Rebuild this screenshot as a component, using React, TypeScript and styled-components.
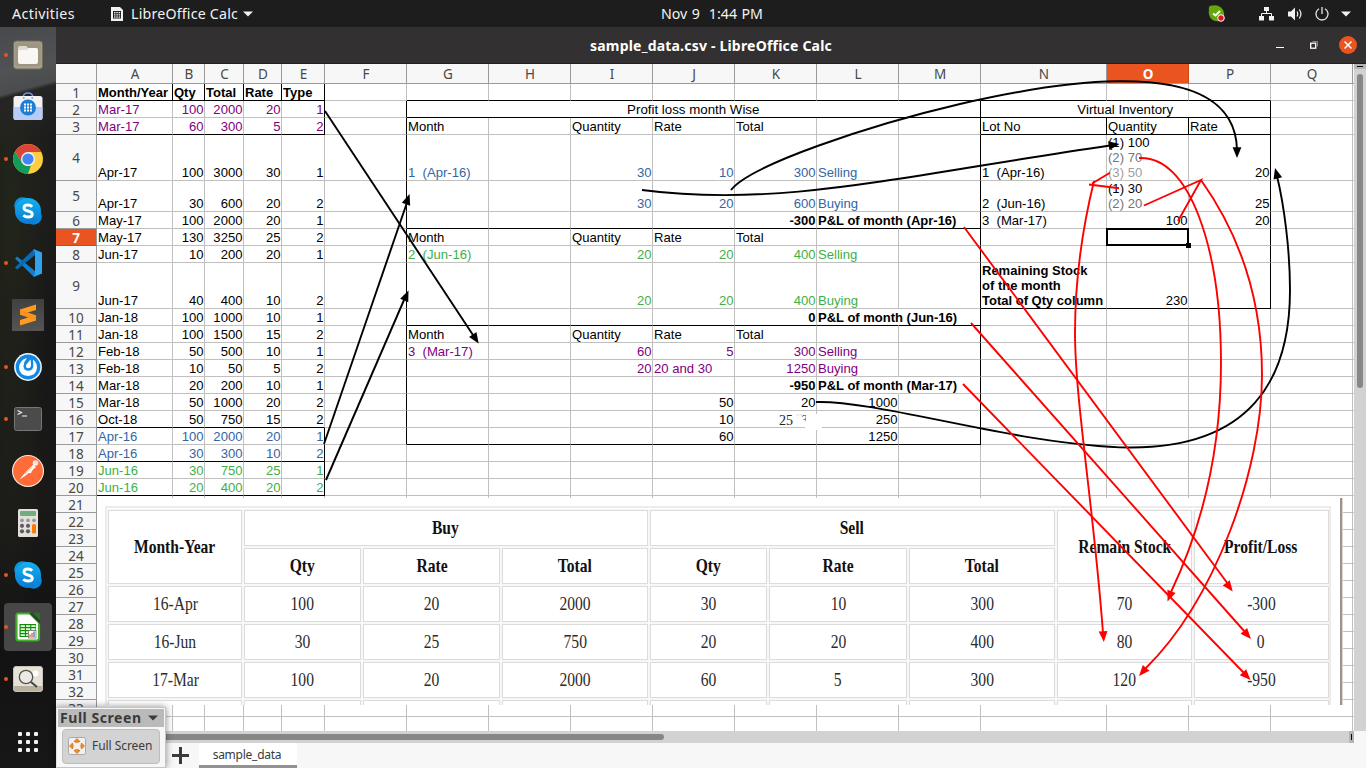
import React from "react";
import styled, { createGlobalStyle, css } from "styled-components";

const UI = `"Noto Sans", "Open Sans", sans-serif`;
const GRID = "#c0c0c0";
const PURPLE = "#800080";
const BLUE = "#3465a4";
const GREEN = "#3faf46";

const GlobalStyle = createGlobalStyle`
  * { box-sizing: border-box; }
  body { margin: 0; overflow: hidden; background: #1d1d1d; }
`;

const Desktop = styled.div`
  width: 1366px;
  height: 768px;
  display: flex;
  flex-direction: column;
  overflow: hidden;
  font-family: ${UI};
`;

/* ---------- top bar ---------- */
const TopBar = styled.header`
  height: 27px;
  flex: none;
  display: grid;
  grid-template-columns: 661px auto 1fr;
  align-items: center;
  background: #1d1d1d;
  color: #f2f2f2;
  font-size: 14.2px;
  line-height: 27px;
`;
const BarLeft = styled.div`
  display: flex;
  align-items: center;
  padding-left: 12px;
`;
const Activities = styled.span`
  width: 99px;
  letter-spacing: 0.38px;
`;
const AppName = styled.span`
  margin: 0 5px 0 8px;
  letter-spacing: 0.2px;
`;
const Clock = styled.div`
  white-space: pre;
  word-spacing: 0.8px;
`;
const BarRight = styled.div`
  display: flex;
  justify-content: flex-end;
  align-items: center;
  padding-right: 14px;
`;
const TrayIcon = styled.svg<{ $gap: number }>`
  display: block;
  margin-right: ${(p) => p.$gap}px;
`;

const Main = styled.div`
  flex: 1;
  display: flex;
  min-height: 0;
`;

/* ---------- dock ---------- */
const Dock = styled.nav`
  width: 56px;
  flex: none;
  padding-top: 2px;
  display: flex;
  flex-direction: column;
  background: linear-gradient(165deg, #48494c 0, #505254 45px, #4b4c4e 66px, #262525 70px, rgba(30, 29, 28, 0) 120px),
    radial-gradient(ellipse at 20% 22%, #22251a 0, rgba(29, 27, 27, 0) 60%),
    linear-gradient(#1c1b1b 0, #1d1d1b 180px, #171717 300px, #1a1917 480px, #121214 620px, #171717 100%);
`;
const DockItem = styled.div<{ $running?: boolean; $active?: boolean }>`
  position: relative;
  width: 48px;
  height: 48px;
  margin: 2px 4px;
  display: flex;
  align-items: center;
  justify-content: center;
  border-radius: 4px;
  background: ${(p) => (p.$active ? "#474747" : "transparent")};
  ${(p) =>
    p.$running &&
    css`
      &::before {
        content: "";
        position: absolute;
        left: 0;
        top: 22px;
        width: 4px;
        height: 4px;
        border-radius: 50%;
        background: #e95420;
      }
    `}
`;
const AppGrid = styled.div`
  display: grid;
  grid-template-columns: repeat(3, 4px);
  gap: 4px;
  margin: 27px auto 0 18px;
`;
const AppDot = styled.i`
  width: 4px;
  height: 4px;
  border-radius: 1px;
  background: #f0f0f0;
`;

/* ---------- window ---------- */
const Window = styled.section`
  flex: 1;
  min-width: 0;
  position: relative;
  display: flex;
  flex-direction: column;
  background: #f7f7f7;
`;
const TitleBar = styled.div`
  height: 37px;
  flex: none;
  display: grid;
  grid-template-columns: 1fr auto 1fr;
  align-items: center;
  background: #323030;
  border-bottom: 1px solid #201e1f;
  color: #fff;
`;
const Title = styled.h1`
  grid-column: 2;
  margin: 0;
  font-size: 14px;
  letter-spacing: 0.2px;
  font-weight: 700;
  white-space: nowrap;
`;
const WindowButtons = styled.div`
  display: flex;
  align-items: center;
  justify-content: flex-end;
  padding-right: 8px;
`;
const WorkArea = styled.div`
  height: 667px;
  flex: none;
  display: flex;
`;
const Viewport = styled.div`
  position: relative;
  width: 1298px;
  height: 667px;
  overflow: hidden;
  background: #fff;
`;
const VScroll = styled.div`
  width: 12px;
  background: #d2d2d2;
`;
const SplitHandleV = styled.div`
  height: 5px;
  display: flex;
  align-items: center;
  justify-content: center;
  background: #b4b4b4;
  &::after {
    content: "";
    width: 6px;
    height: 1px;
    background: #000;
  }
`;
const ThumbV = styled.div`
  width: 6px;
  height: 314px;
  margin: 5px 0 0 3px;
  border-radius: 3px;
  background: #878787;
`;
const HScroll = styled.div`
  width: 1298px;
  height: 12px;
  flex: none;
  display: flex;
  align-items: center;
  background: #d2d2d2;
`;
const ThumbH = styled.div`
  width: 608px;
  height: 6px;
  border-radius: 3px;
  background: #878787;
`;
const SplitHandleH = styled.div`
  width: 5px;
  height: 12px;
  margin-left: auto;
  padding: 3px 2px;
  background: #b4b4b4;
  &::after {
    content: "";
    display: block;
    width: 1px;
    height: 6px;
    background: #000;
  }
`;
const TabBar = styled.div`
  height: 25px;
  display: flex;
  align-items: stretch;
  padding-left: 115px;
  background: #f7f7f7;
`;
const AddTab = styled.svg`
  margin: 3px 10px 0 0;
`;
const Tab = styled.div`
  width: 98px;
  height: 25px;
  padding-right: 2px;
  background: #fff;
  border-bottom: 3px solid #929292;
  color: #3b3b3b;
  font-size: 12px;
  line-height: 24px;
  text-align: center;
  letter-spacing: -0.25px;
`;

/* ---------- sheet ---------- */
const COLS = [76, 32, 39, 38, 43, 82, 82, 82, 82, 82, 82, 82, 82, 126, 82, 82, 82];
const LETTERS = "ABCDEFGHIJKLMNOPQ";
const ROWS = [17, 17, 17, 46, 31, 17, 17, 17, 46, ...Array(25).fill(17)];

const Sheet = styled.div`
  display: grid;
  width: 1299px;
  grid-template-columns: 41px ${COLS.map((w) => w + "px").join(" ")} 2px;
  grid-template-rows: 20px ${ROWS.map((h) => h + "px").join(" ")};
`;
const HeadCell = styled.div<{ $sel?: boolean; $row?: boolean; $tall?: boolean }>`
  display: flex;
  align-items: center;
  justify-content: center;
  padding-top: ${(p) => (p.$tall ? 0 : p.$row ? 2 : 1)}px;
  padding-left: ${(p) => (p.$row ? 0 : 1)}px;
  background: ${(p) => (p.$sel ? "#e95420" : "#f7f7f7")};
  color: ${(p) => (p.$sel ? "#fff" : "#484848")};
  font-weight: ${(p) => (p.$sel ? 700 : 400)};
  font-size: 13.5px;
  line-height: 14px;
  border-right: 1px solid ${(p) => (p.$sel && !p.$row ? "#cf4818" : "#9a9a9a")};
  border-bottom: 1px solid ${(p) => (p.$sel && p.$row ? "#cf4818" : "#9a9a9a")};
`;
type CellStyle = {
  $right?: boolean;
  $center?: boolean;
  $bold?: boolean;
  $color?: string;
  $span?: number;
  $br?: string;
  $bb?: string;
};
const Cell = styled.div<CellStyle>`
  position: relative;
  display: flex;
  flex-direction: column;
  justify-content: flex-end;
  min-width: 0;
  padding: 0 ${(p) => (p.$center ? 1.5 : 0.5)}px 0 1px;
  font-family: "Liberation Sans", Arial, sans-serif;
  font-size: ${(p) => (p.$center ? 13.3 : p.$bold ? 13 : 13.1)}px;
  line-height: 15px;
  white-space: pre;
  grid-column: span ${(p) => p.$span ?? 1};
  text-align: ${(p) => (p.$right ? "right" : p.$center ? "center" : "left")};
  font-weight: ${(p) => (p.$bold ? 700 : 400)};
  color: ${(p) => p.$color ?? "#000"};
  border-right: 1px solid ${(p) => p.$br ?? GRID};
  border-bottom: 1px solid ${(p) => p.$bb ?? GRID};
`;
const Line = styled.span<{ $tone?: string }>`
  color: ${(p) => p.$tone ?? "inherit"};
`;
const Cursor = styled.div`
  position: absolute;
  z-index: 1;
  left: -1px;
  top: -1px;
  width: 83px;
  height: 18px;
  border: 2px solid #000;
  &::after {
    content: "";
    position: absolute;
    right: -4px;
    bottom: -4px;
    width: 5px;
    height: 5px;
    background: #000;
  }
`;

type Entry = { v: React.ReactNode; r?: boolean; b?: boolean; c?: string };
const cells: Record<string, Entry> = {};
const put = (ref: string, v: React.ReactNode, o: Omit<Entry, "v"> = {}) => {
  cells[ref] = { v, ...o };
};

const LEDGER: [string, number, number, number, number, string?][] = [
  ["Mar-17", 100, 2000, 20, 1, PURPLE],
  ["Mar-17", 60, 300, 5, 2, PURPLE],
  ["Apr-17", 100, 3000, 30, 1],
  ["Apr-17", 30, 600, 20, 2],
  ["May-17", 100, 2000, 20, 1],
  ["May-17", 130, 3250, 25, 2],
  ["Jun-17", 10, 200, 20, 1],
  ["Jun-17", 40, 400, 10, 2],
  ["Jan-18", 100, 1000, 10, 1],
  ["Jan-18", 100, 1500, 15, 2],
  ["Feb-18", 50, 500, 10, 1],
  ["Feb-18", 10, 50, 5, 2],
  ["Mar-18", 20, 200, 10, 1],
  ["Mar-18", 50, 1000, 20, 2],
  ["Oct-18", 50, 750, 15, 2],
  ["Apr-16", 100, 2000, 20, 1, BLUE],
  ["Apr-16", 30, 300, 10, 2, BLUE],
  ["Jun-16", 30, 750, 25, 1, GREEN],
  ["Jun-16", 20, 400, 20, 2, GREEN],
];
["Month/Year", "Qty", "Total", "Rate", "Type"].forEach((t, i) => put(LETTERS[i] + "1", t, { b: true }));
LEDGER.forEach(([m, q, t, ra, ty, c], i) => {
  const n = i + 2;
  put("A" + n, m, { c });
  [q, t, ra, ty].forEach((v, k) => put("BCDE"[k] + n, v, { r: true, c }));
});
[3, 7, 11].forEach((n) => {
  put("G" + n, "Month");
  put("I" + n, "Quantity");
  put("J" + n, "Rate");
  put("K" + n, "Total");
});
const deal = (n: number, label: string, q: number, rate: React.ReactNode, total: number, kind: string, c: string) => {
  if (label) put("G" + n, label, { c });
  put("I" + n, q, { r: true, c });
  put("J" + n, rate, { r: typeof rate === "number", c });
  put("K" + n, total, { r: true, c });
  put("L" + n, kind, { c });
};
deal(4, "1  (Apr-16)", 30, 10, 300, "Selling", BLUE);
deal(5, "", 30, 20, 600, "Buying", BLUE);
deal(8, "2  (Jun-16)", 20, 20, 400, "Selling", GREEN);
deal(9, "", 20, 20, 400, "Buying", GREEN);
deal(12, "3  (Mar-17)", 60, 5, 300, "Selling", PURPLE);
deal(13, "", 20, "20 and 30", 1250, "Buying", PURPLE);
([[6, "-300", "Apr-16"], [10, "0", "Jun-16"], [14, "-950", "Mar-17"]] as const).forEach(([n, v, m]) => {
  put("K" + n, v, { r: true, b: true });
  put("L" + n, `P&L of month (${m})`, { b: true });
});
put("J15", 50, { r: true });
put("K15", 20, { r: true });
put("L15", 1000, { r: true });
put("J16", 10, { r: true });
put("L16", 250, { r: true });
put("J17", 60, { r: true });
put("L17", 1250, { r: true });
put("N3", "Lot No");
put("O3", "Quantity");
put("P3", "Rate");
put("N4", "1  (Apr-16)");
put("N5", "2  (Jun-16)");
put("N6", "3  (Mar-17)");
put("O4", <><Line>(1) 100</Line><Line $tone="#757575">(2) 70</Line><Line $tone="#a0a0a0">(3) 50</Line></>);
put("O5", <><Line>(1) 30</Line><Line $tone="#757575">(2) 20</Line></>);
put("O6", 100, { r: true });
put("O7", <Cursor />);
put("P4", 20, { r: true });
put("P5", 25, { r: true });
put("P6", 20, { r: true });
put("N9", <><Line>Remaining Stock</Line><Line>of the month</Line><Line>Total of Qty column</Line></>, { b: true });
put("O9", 230, { r: true });

const within = (n: number, a: number, b: number) => n >= a && n <= b;

function rightEdge(col: string, n: number): string {
  if ("ABCD".includes(col) && n === 1) return "#000";
  if (col === "E" && (n <= 3 || within(n, 17, 20))) return "#000";
  if ((col === "F" || col === "M") && within(n, 2, 17)) return "#000";
  if ((col === "N" || col === "O") && n === 3) return "#000";
  if (col === "P" && within(n, 2, 9)) return "#000";
  if (col === "L" && [6, 10, 14].includes(n)) return "transparent";
  return GRID;
}
function bottomEdge(col: string, n: number): string {
  if (within(col.charCodeAt(0), 65, 69) && [1, 3, 16, 18, 20].includes(n)) return "#000";
  const profit = "GHIJKLM".includes(col);
  const stock = "NOP".includes(col);
  if ((profit || stock) && n <= 2) return "#000";
  if (profit && [6, 10, 17].includes(n)) return "#000";
  if (stock && (n === 3 || n === 9)) return "#000";
  return GRID;
}

function SheetRow({ n }: { n: number }) {
  const out: React.ReactNode[] = [
    <HeadCell key="h" $row $tall={ROWS[n - 1] > 17} $sel={n === 7}>{n}</HeadCell>,
  ];
  for (let i = 0; i < LETTERS.length; i++) {
    const col = LETTERS[i];
    if (n === 2 && col === "G") {
      out.push(<Cell key="G" $span={7} $center $br="#000" $bb="#000">Profit loss month Wise</Cell>);
      i += 6;
      continue;
    }
    if (n === 2 && col === "N") {
      out.push(<Cell key="N" $span={3} $center $br="#000" $bb="#000">Virtual Inventory</Cell>);
      i += 2;
      continue;
    }
    const e = cells[col + n];
    out.push(
      <Cell key={col} $right={e?.r} $bold={e?.b} $color={e?.c} $br={rightEdge(col, n)} $bb={bottomEdge(col, n)}>
        {e?.v}
      </Cell>
    );
  }
  out.push(<Cell key="z" $br="transparent" />);
  return <>{out}</>;
}

/* ---------- embedded summary picture ---------- */
const Picture = styled.div`
  position: absolute;
  left: 41px;
  top: 434px;
  width: 1246px;
  height: 207px;
  padding: 8px 0 0 8px;
  overflow: hidden;
  background: #fff;
  &::after {
    content: "";
    position: absolute;
    right: 0;
    top: 0;
    width: 3px;
    height: 207px;
    background: linear-gradient(90deg, #9c938e 0 2px, #ddd6cf 2px);
  }
`;
const SummaryFrame = styled.div`
  width: 1226px;
  height: 240px;
  padding: 2px 0 0 1px;
  border: 2px solid #ececec;
`;
const Summary = styled.div`
  display: grid;
  width: 1221px;
  grid-template-columns: 134px 117px 137px 145.5px 117.5px 138px 146px 134.5px 135px;
  grid-template-rows: repeat(6, 36px);
  gap: 2px;
`;
const SumCell = styled.div<{ $head?: boolean; $cs?: number; $rs?: number }>`
  grid-column: span ${(p) => p.$cs ?? 1};
  grid-row: span ${(p) => p.$rs ?? 1};
  display: flex;
  align-items: center;
  justify-content: center;
  padding-bottom: 1px;
  border: 1px solid #dcdcdc;
  box-shadow: 0 0 0 0.5px #efefef;
  font-family: "Liberation Serif", "Times New Roman", serif;
  font-size: 19px;
  line-height: 20px;
  font-weight: ${(p) => (p.$head ? 700 : 400)};
  color: ${(p) => (p.$head ? "#111" : "#2b2b2b")};
  white-space: nowrap;
`;
const Narrow = styled.span`
  transform: scaleX(0.82);
`;
const SUMMARY = [
  ["16-Apr", 100, 20, 2000, 30, 10, 300, 70, "-300"],
  ["16-Jun", 30, 25, 750, 20, 20, 400, 80, "0"],
  ["17-Mar", 100, 20, 2000, 60, 5, 300, 120, "-950"],
  ["", "", "", "", "", "", "", "", ""],
];

function SummaryTable() {
  const head = (t: string, cs = 1, rs = 1) => (
    <SumCell $head $cs={cs} $rs={rs}><Narrow>{t}</Narrow></SumCell>
  );
  return (
    <Picture>
      <SummaryFrame>
        <Summary>
          {head("Month-Year", 1, 2)}
          {head("Buy", 3)}
          {head("Sell", 3)}
          {head("Remain Stock", 1, 2)}
          {head("Profit/Loss", 1, 2)}
          {head("Qty")}{head("Rate")}{head("Total")}
          {head("Qty")}{head("Rate")}{head("Total")}
          {SUMMARY.map((row, i) => row.map((v, k) => (
            <SumCell key={`${i}-${k}`}><Narrow>{v}</Narrow></SumCell>
          )))}
        </Summary>
      </SummaryFrame>
    </Picture>
  );
}

/* ---------- drawn arrows ---------- */
const ArrowLayer = styled.svg`
  position: absolute;
  left: 0;
  top: 0;
  z-index: 2;
  pointer-events: none;
`;
function Head({ x, y, dx, dy, c }: { x: number; y: number; dx: number; dy: number; c: string }) {
  const a = (Math.atan2(dy, dx) * 180) / Math.PI;
  return <path d="M0 0L-10.8 -4.4V4.4Z" fill={c} transform={`translate(${x} ${y}) rotate(${a})`} />;
}
function Arrows() {
  const red = "#ff0000";
  return (
    <ArrowLayer width="1298" height="667" viewBox="56 64 1298 667" fill="none">
      <rect x="776" y="411" width="40" height="15" fill="#fff" />
      <rect x="805" y="414" width="17" height="16" fill="#fff" />
      <text x="779" y="425" fontFamily="Liberation Serif" fontSize="14" fill="#222">25</text>
      <text x="801" y="425" fontFamily="Liberation Serif" fontSize="14" fill="#444">3</text>
      <path d="M796 415h7" stroke="#ececec" strokeWidth="1.5" />
      <rect x="806" y="413" width="10" height="14" fill="#fff" />
      <rect x="800" y="422" width="10" height="4" fill="#fff" />
      <g stroke="#000" strokeWidth="1.9">
        <path d="M325 111L473 335" />
        <path d="M324 444L406.500 204" />
        <path d="M326 480L404 300" />
        <path d="M642 190C780 208 900 176 1110 145.500" />
        <path d="M731 190C750 165 870 125 960 104C1030 88 1080 81.500 1117 81.300C1190 80 1236 100 1237 150" />
        <path d="M816 402C880 400 1020 446 1130 447.500C1250 448 1290 380 1290 290C1290 250 1284 205 1277 176" />
      </g>
      <Head x={478.7} y={343.500} dx={153} dy={232} c="#000" />
      <Head x={409.5} y={194} dx={85} dy={-249} c="#000" />
      <Head x={408.500} y={290.500} dx={82} dy={-190} c="#000" />
      <Head x={1119.500} y={144} dx={10} dy={-1.5} c="#000" />
      <Head x={1237} y={158} dx={0} dy={1} c="#000" />
      <Head x={1275} y={168} dx={-3} dy={-11} c="#000" />
      <g stroke={red} strokeWidth="1.9">
        <path d="M964 227L1228 584" />
        <path d="M971 323L1245 632" />
        <path d="M963 384L1244 673" />
        <path d="M1139 158C1190 155 1221 250 1221 363C1221 430 1210 510 1171 592" />
        <path d="M1144 205.500L1201 180L1178 221M1201 180C1240 235 1262 300 1262 375C1262 470 1215 600 1145 669" />
        <path d="M1110 172.700L1092 183.500M1089 184.500L1119 188.300M1094 181C1082 230 1075 280 1075 333C1075 400 1094 510 1103 633" />
      </g>
      <Head x={1232.7} y={591.5} dx={269} dy={364} c={red} />
      <Head x={1251} y={639} dx={280} dy={316} c={red} />
      <Head x={1250.5} y={680} dx={287} dy={296} c={red} />
      <Head x={1167.500} y={601.500} dx={-4} dy={10} c={red} />
      <Head x={1139} y={676} dx={-7} dy={8} c={red} />
      <Head x={1103.800} y={642} dx={0.6} dy={9} c={red} />
    </ArrowLayer>
  );
}

/* ---------- floating toolbar ---------- */
const FloatBar = styled.aside`
  position: absolute;
  z-index: 3;
  left: 0;
  bottom: 0;
  width: 110px;
  height: 61px;
  padding: 1px 1px 0 1px;
  background: #f7f7f7;
  border: 1px solid #c4c4c4;
  border-left-color: #e2e2e2;
  box-shadow: 0 0 7px rgba(0, 0, 0, 0.45);
`;
const FloatHead = styled.div`
  height: 18px;
  display: flex;
  align-items: center;
  justify-content: space-between;
  padding: 0 6px 0 2px;
  background: #bababa;
  color: #3a3a3a;
  font-size: 14px;
  letter-spacing: 0.55px;
  font-weight: 700;
  line-height: 18px;
`;
const FloatButton = styled.div`
  height: 35px;
  margin: 2px 4px 0 4px;
  padding: 0 0 2px 5px;
  display: flex;
  align-items: center;
  gap: 6px;
  border: 1px solid #bdbdbd;
  border-radius: 4px;
  background: #d3d3d3;
  color: #3b3b3b;
  font-size: 12px;
  letter-spacing: -0.05px;
  white-space: nowrap;
`;

/* ---------- dock icons ---------- */
const Files = () => (
  <svg width="30" height="30" viewBox="0 0 30 30">
    <rect x="0.500" y="1" width="29" height="28" rx="3" fill="#aaa28f" stroke="#6f6a5c" />
    <rect x="2" y="2.500" width="26" height="24" rx="2" fill="#9d9682" />
    <path d="M5 8q0-2 2-2h6l2 2h7q3 0 3 3v9H5z" fill="#dfdbd0" />
    <path d="M5 12q0-2 2-2h7l2-2h7q2 0 2 2v12q0 2-2 2H7q-2 0-2-2z" fill="#f8f7f4" />
  </svg>
);
const Software = () => (
  <svg width="30" height="30" viewBox="0 0 30 30">
    <path d="M10 6q0-5 5-5t5 5" fill="none" stroke="#6e8fe0" strokeWidth="1.600" />
    <rect x="0.500" y="4" width="29" height="24" rx="2.500" fill="#f2f2f4" />
    <path d="M.5 15h29v10.500q0 2.500-2.500 2.500H3Q.5 28 .5 25.500z" fill="#b9cbf7" />
    <path d="M10 6h1.600M18.500 6H20" stroke="#6e8fe0" strokeWidth="1.600" />
    <circle cx="15" cy="15.500" r="8" fill="#1c7fd6" />
    {[11.500, 14.500, 17.500].map((y) => [11, 14, 17].map((x) => <rect key={`${x}${y}`} x={x} y={y} width="2" height="2" fill="#fff" />))}
  </svg>
);
const Chrome = () => (
  <svg width="30" height="30" viewBox="0 0 30 30">
    <circle cx="15" cy="15" r="15" fill="#ffcd40" />
    <path d="M2.010 7.500L8.940 18.500L15 22L15 8H28L27.990 7.500A15 15 0 0 0 2.010 7.500Z" fill="#db4437" />
    <path d="M2.010 7.500L8.940 18.500A7 7 0 0 0 18 21.300L15 30A15 15 0 0 1 2.010 7.500Z" fill="#0f9d58" />
    <circle cx="15" cy="15" r="7" fill="#f1f1f1" />
    <circle cx="15" cy="15" r="5.600" fill="#4285f4" />
  </svg>
);
const Skype = ({ id }: { id: string }) => (
  <svg width="28" height="28" viewBox="0 0 28 28">
    <defs>
      <linearGradient id={id} x1="0" y1="0" x2="0" y2="1">
        <stop offset="0" stopColor="#12b2ee" />
        <stop offset="1" stopColor="#0a7ad6" />
      </linearGradient>
    </defs>
    <circle cx="8.500" cy="8.500" r="8.300" fill="#1490df" />
    <circle cx="19.500" cy="19.500" r="8.300" fill="#0b86d8" />
    <circle cx="14" cy="14" r="13" fill={`url(#${id})`} />
    <path d="M18.200 9.700Q16.500 8 14 8Q10 8 10 10.900Q10 13.200 14 14Q18.300 14.800 18.300 17.200Q18.300 20 14 20Q11.200 20 9.300 18.200" fill="none" stroke="#fff" strokeWidth="2.900" />
  </svg>
);
const VsCode = () => (
  <svg width="28" height="28" viewBox="0 0 28 28">
    <path d="M1 9.500L3 7.500L21 22V28L19.500 27.500Z" fill="#0f7fcf" />
    <path d="M1 18.500L3 20.500L21 6V0L19.500.5Z" fill="#0a6bb5" />
    <path d="M20 .3L28 3.500V24.500L20 27.800L19.500 27L21 25V3L19.500 1Z" fill="#2fa3ee" />
  </svg>
);
const Sublime = () => (
  <svg width="32" height="32" viewBox="0 0 32 32">
    <defs>
      <linearGradient id="sub" x1="0" y1="0" x2="0" y2="1">
        <stop offset="0" stopColor="#404040" />
        <stop offset="1" stopColor="#555" />
      </linearGradient>
    </defs>
    <rect width="32" height="32" rx="1" fill="url(#sub)" />
    <path d="M8 10.500L24 5.500V11L15 13.700L24 16.500V21.500L8 26.500V21L17 18.200L8 15.500Z" fill="#ff9b20" />
    <path d="M8 10.500V15.500L24 21.500V16.500Z" fill="#f9931c" />
  </svg>
);
const Mattermost = () => (
  <svg width="28" height="28" viewBox="0 0 28 28">
    <circle cx="14" cy="14" r="13.900" fill="#f4f8fb" />
    <circle cx="14" cy="14" r="12.400" fill="#1187e6" />
    <path d="M13 5Q5.500 7 5 14.500Q5.500 22.500 14 23Q22.500 22.500 23 14.500Q23 9.500 19 6.500L19.300 12Q19.600 17.500 14.500 17.800Q9.500 17.500 9.500 13Q9.500 9 13 5Z" fill="#fff" />
    <path d="M16.500 6.500Q17.200 11 17 13Q16.300 15.500 14 15.300Q11.500 14.800 12 12Z" fill="#fff" />
  </svg>
);
const Terminal = () => (
  <svg width="28" height="24" viewBox="0 0 28 24">
    <rect x="0.500" y="0.500" width="27" height="23" rx="2" fill="#4b4b4b" stroke="#777" />
    <path d="M3.500 3.500L7.500 5.500L3.500 7.500M8 9H13" fill="none" stroke="#f4f4f4" strokeWidth="1.100" />
  </svg>
);
const Postman = () => (
  <svg width="32" height="32" viewBox="0 0 32 32">
    <circle cx="16" cy="16" r="16" fill="#f8efe9" />
    <circle cx="16" cy="16" r="14.900" fill="#ff6c37" />
    <circle cx="23.500" cy="8" r="2.800" fill="#fbe8de" />
    <path d="M21 10L24 12L13 21L7.500 24.500L12 19Z" fill="#fff" />
    <path d="M22 11L18.500 17.500L15 17L23 9" fill="none" stroke="#fff" strokeWidth="1.200" />
    <path d="M13 19L20 12.500" stroke="#f0a080" strokeWidth=".7" />
  </svg>
);
const Calculator = () => (
  <svg width="20" height="28" viewBox="0 0 20 28">
    <rect width="20" height="28" rx="1.500" fill="#e4e1dc" />
    <rect x="2" y="2" width="16" height="5" rx="1" fill="#70ac7d" />
    {[4, 10, 16].map((x) => <circle key={x} cx={x} cy="11.300" r="1.900" fill="#999" />)}
    {[16.800, 22.300].map((y) => [4, 10].map((x) => <circle key={`${x}-${y}`} cx={x} cy={y} r="2.100" fill="#5e5c64" />))}
    <rect x="14" y="15" width="4" height="9.500" rx="1.500" fill="#ff7800" />
  </svg>
);
const CalcIcon = () => (
  <svg width="26" height="30" viewBox="0 0 26 30">
    <path d="M3.500 1.500H15L24 10.500V26Q24 28.500 21.500 28.500H3.500Q1.500 28.500 1.500 26V3.500Q1.500 1.500 3.500 1.500Z" fill="#fff" stroke="#43b02a" strokeWidth="2.200" />
    <path d="M14 1L25 12V8L18 1Z" fill="#3a3a3a" />
    <path d="M18 1H25V8Z" fill="#15820e" />
    <rect x="4.500" y="12" width="16.500" height="13" fill="#138a0c" />
    {[13.200, 16.200, 19.200, 22.200].map((y) => [5.700, 11, 16.300].map((x) => <rect key={`${x}-${y}`} x={x} y={y} width="4.200" height="1.800" fill="#d8ffcf" />))}
    <rect x="13.500" y="18.500" width="7.500" height="7.500" fill="#fff" stroke="#777" strokeWidth=".8" />
    <path d="M15 25v-2.500M17 25v-4" stroke="#e9632a" strokeWidth="1.300" />
    <path d="M19 25v-5.500" stroke="#2e7cc9" strokeWidth="1.300" />
  </svg>
);
const ImageViewer = () => (
  <svg width="30" height="26" viewBox="0 0 30 26">
    <rect x="0.500" y="0.500" width="29" height="25" rx="2.500" fill="#e6e2d8" stroke="#c9c3b5" />
    <path d="M1 20h28v3q0 2-2 2H3q-2 0-2-2z" fill="#b8b19d" />
    <circle cx="22.500" cy="7.500" r="3" fill="#fff" />
    <circle cx="13" cy="11" r="6.700" fill="#eceae4" stroke="#55534f" strokeWidth="1.300" />
    <path d="M18 16L24 21" stroke="#444" strokeWidth="2" />
  </svg>
);

const DOCK: { icon: React.ReactNode; running?: boolean; active?: boolean }[] = [
  { icon: <Files />, running: true },
  { icon: <Software /> },
  { icon: <Chrome />, running: true },
  { icon: <Skype id="sk1" /> },
  { icon: <VsCode />, running: true },
  { icon: <Sublime /> },
  { icon: <Mattermost />, running: true },
  { icon: <Terminal />, running: true },
  { icon: <Postman /> },
  { icon: <Calculator /> },
  { icon: <Skype id="sk2" />, running: true },
  { icon: <CalcIcon />, running: true, active: true },
  { icon: <ImageViewer />, running: true },
];

const Caret = ({ gap = 0, color = "#f2f2f2" }) => (
  <TrayIcon $gap={gap} width="10" height="6" viewBox="0 0 10 6">
    <path d="M0 .5H10L5 5.500Z" fill={color} />
  </TrayIcon>
);

export default function App() {
  return (
    <Desktop>
      <GlobalStyle />
      <TopBar>
        <BarLeft>
          <Activities>Activities</Activities>
          <svg width="12" height="14" viewBox="0 0 12 14">
            <path d="M0 0H9L12 3V14H0Z" fill="#f2f2f2" />
            <path d="M2 4H10V11.500H2Z" fill="#1d1d1d" />
            {[5, 7.200, 9.400].map((y) => [3, 5.300, 7.600].map((x) => <rect key={`${x}-${y}`} x={x} y={y} width="1.500" height="1.300" fill="#f2f2f2" />))}
          </svg>
          <AppName>LibreOffice Calc</AppName>
          <Caret />
        </BarLeft>
        <Clock>Nov 9  1:44 PM</Clock>
        <BarRight>
          <TrayIcon $gap={34} width="17" height="17" viewBox="0 0 17 17">
            <path d="M1 5Q0 0 5 .6Q9-.4 13 2.500Q17 6 16 10Q17 16 11.500 16Q6 17 2.500 13Q0 9.500 1 5Z" fill="#64a70b" />
            <path d="M5 8.500L7.500 10.500L12 6" fill="none" stroke="#fff" strokeWidth="2" />
            <circle cx="13" cy="13" r="3.300" fill="#e81123" stroke="#fff" />
          </TrayIcon>
          <TrayIcon $gap={14} width="15" height="14" viewBox="0 0 15 14">
            <path d="M5 0h5v4H5zM0 9h5v4.500H0zM10 9h5v4.500h-5z" fill="#f2f2f2" />
            <path d="M7.500 4V7M2.500 9V6.500H12.500V9" fill="none" stroke="#f2f2f2" />
          </TrayIcon>
          <TrayIcon $gap={12} width="15" height="14" viewBox="0 0 15 14">
            <path d="M0 4.500H3L7 .5V13.500L3 9.500H0Z" fill="#f2f2f2" />
            <path d="M9 4.500Q10.500 7 9 9.500M11.300 2.500Q14.500 7 11.300 11.500" fill="none" stroke="#f2f2f2" strokeWidth="1.200" />
          </TrayIcon>
          <TrayIcon $gap={12} width="14" height="14" viewBox="0 0 14 14">
            <path d="M4 1.800A6 6 0 1 0 10 1.800M7 0V7" fill="none" stroke="#e6e6e6" strokeWidth="1.300" />
          </TrayIcon>
          <Caret gap={1} />
        </BarRight>
      </TopBar>
      <Main>
        <Dock>
          {DOCK.map((d, i) => (
            <DockItem key={i} $running={d.running} $active={d.active}>{d.icon}</DockItem>
          ))}
          <AppGrid>{Array.from({ length: 9 }, (_, i) => <AppDot key={i} />)}</AppGrid>
        </Dock>
        <Window>
          <TitleBar>
            <Title>sample_data.csv - LibreOffice Calc</Title>
            <WindowButtons>
              <TrayIcon $gap={26} width="8" height="10" viewBox="0 0 8 10"><path d="M0 7.500H8" stroke="#fff" /></TrayIcon>
              <TrayIcon $gap={21} width="8" height="8" viewBox="0 0 8 8">
                <path d="M2.500 .5H7.500V5.500" fill="none" stroke="#8b8989" />
                <rect x=".7" y="2.200" width="5" height="5" fill="none" stroke="#fff" strokeWidth="1.300" />
              </TrayIcon>
              <TrayIcon $gap={1} width="18" height="18" viewBox="0 0 18 18">
                <circle cx="9" cy="9" r="9" fill="#e95420" />
                <path d="M5.500 5.500L12.500 12.500M12.500 5.500L5.500 12.500" stroke="#fff" strokeWidth="1.500" />
              </TrayIcon>
            </WindowButtons>
          </TitleBar>
          <WorkArea>
            <Viewport>
              <Sheet>
                <HeadCell />
                {LETTERS.split("").map((l) => <HeadCell key={l} $sel={l === "O"}>{l}</HeadCell>)}
                <HeadCell />
                {ROWS.map((_, i) => <SheetRow key={i} n={i + 1} />)}
              </Sheet>
              <SummaryTable />
              <Arrows />
            </Viewport>
            <VScroll>
              <SplitHandleV />
              <ThumbV />
            </VScroll>
          </WorkArea>
          <HScroll>
            <ThumbH />
            <SplitHandleH />
          </HScroll>
          <TabBar>
            <AddTab width="18" height="18" viewBox="0 0 18 18">
              <path d="M1 9.500H18M9.500 1V18" stroke="#3a3a3a" strokeWidth="3" />
            </AddTab>
            <Tab>sample_data</Tab>
          </TabBar>
          <FloatBar>
            <FloatHead>Full Screen<Caret color="#3a3a3a" /></FloatHead>
            <FloatButton>
              <svg width="18" height="18" viewBox="0 0 18 18">
                <rect x=".5" y=".5" width="17" height="17" rx="2" fill="#f3f1ee" stroke="#a9a9a9" />
                <g fill="#f08c22" stroke="#c5600d" strokeWidth=".6">
                  <path d="M6 4.500L9 1.500L12 4.500Q9 6.500 6 4.500ZM6 13.500L9 16.500L12 13.500Q9 11.500 6 13.500ZM4.500 6L1.500 9L4.500 12Q6 9 4.500 6ZM13.500 6L16.500 9L13.500 12Q12 9 13.500 6Z" />
                </g>
              </svg>
              Full Screen
            </FloatButton>
          </FloatBar>
        </Window>
      </Main>
    </Desktop>
  );
}
